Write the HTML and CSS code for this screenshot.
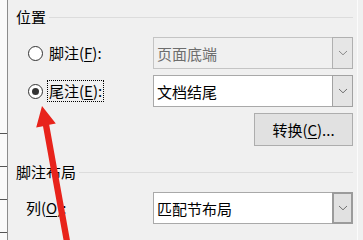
FILE: index.html
```html
<!DOCTYPE html>
<html lang="zh-CN">
<head>
<meta charset="utf-8">
<title>脚注和尾注</title>
<link rel="stylesheet" href="styles.css">
</head>
<body>
<div class="screen">
  <div class="ruler">
    <i class="tick first"></i><i class="tick"></i><i class="tick"></i><i class="tick"></i>
  </div>
  <div class="dialog">
    <div class="group-title"><span class="gt-text">位置</span><span class="rule"></span></div>

    <div class="row r1">
      <div class="opt"><span class="radio"></span><span class="lbl">脚注(<u>F</u>):</span></div>
      <div class="combo disabled">
        <span class="val">页面底端</span>
        <span class="drop"><svg width="10" height="6" viewBox="0 0 10 6"><path d="M1 1 L5 4.8 L9 1" fill="none" stroke="#8a8a8a" stroke-width="1"/></svg></span>
      </div>
    </div>

    <div class="row r2">
      <div class="opt"><span class="radio on"><span class="dot"></span></span><span class="lbl focus">尾注(<u>E</u>):</span></div>
      <div class="combo">
        <span class="val">文档结尾</span>
        <span class="drop"><svg width="10" height="6" viewBox="0 0 10 6"><path d="M1 1 L5 4.8 L9 1" fill="none" stroke="#707070" stroke-width="1"/></svg></span>
      </div>
    </div>

    <div class="btn-row"><span class="btn">转换(<u>C</u>)...</span></div>

    <div class="group-title g2"><span class="gt-text">脚注布局</span><span class="rule"></span></div>

    <div class="row r3">
      <div class="opt"><span class="lbl plain">列(<u>O</u>):</span></div>
      <div class="combo">
        <span class="val">匹配节布局</span>
        <span class="drop hot"><svg width="10" height="6" viewBox="0 0 10 6"><path d="M1 1 L5 4.8 L9 1" fill="none" stroke="#707070" stroke-width="1"/></svg></span>
      </div>
    </div>
  </div>
  <div class="edge"></div>
  <svg class="arrow" width="363" height="240" viewBox="0 0 363 240">
    <polygon points="42,106 55.8,123.6 49.2,124.8 70.2,241.5 64.0,242.6 43.0,126.2 36.2,127.6" fill="#e8231b"/>
  </svg>
</div>
</body>
</html>
```

FILE: styles.css
```css
html, body {
  margin: 0;
  padding: 0;
}
body {
  width: 363px;
  height: 240px;
  overflow: hidden;
  background: #f0f0f0;
  font-family: "Noto Sans CJK SC", "Noto Sans", sans-serif;
  font-size: 15px;
  color: #000;
}
.screen {
  position: relative;
  display: flex;
  width: 363px;
  height: 240px;
  overflow: hidden;
}
.ruler {
  width: 7px;
  height: 240px;
  background: #fafafa;
  border-right: 1px solid #8c8c8c;
  display: flex;
  flex-direction: column;
}
.tick {
  display: block;
  width: 7px;
  height: 1px;
  background: #555;
  margin-top: 32px;
}
.tick.first {
  margin-top: 133px;
}
.dialog {
  width: 349px;
  padding: 0 4px 0 8px;
  box-sizing: border-box;
  display: flex;
  flex-direction: column;
}
.edge {
  width: 6px;
  height: 240px;
  border-left: 1px solid #fbfbfb;
  box-sizing: border-box;
}
.group-title {
  height: 34px;
  display: flex;
  align-items: center;
}
.gt-text {
  line-height: 20px;
  white-space: nowrap;
}
.rule {
  flex: 1;
  height: 1px;
  background: #dcdcdc;
  margin-left: 3px;
}
.group-title.g2 {
  margin-top: 10px;
  height: 32px;
}
.row {
  display: flex;
  height: 32px;
  align-items: center;
}
.r1 { margin-top: 3px; }
.r2 { margin-top: 6px; }
.r3 { margin-top: 4px; }
.opt {
  width: 137px;
  display: flex;
  align-items: center;
}
.radio {
  width: 15px;
  height: 15px;
  margin-left: 12px;
  box-sizing: border-box;
  border: 1px solid #333;
  border-radius: 50%;
  background: #fff;
  display: flex;
  align-items: center;
  justify-content: center;
}
.dot {
  width: 7px;
  height: 7px;
  border-radius: 50%;
  background: #333;
}
.lbl {
  margin-left: 6px;
  line-height: 20px;
  white-space: nowrap;
}
.lbl.focus {
  margin-left: 4px;
  padding: 0 1px;
  line-height: 20px;
  border: 1px dotted #000;
}
.lbl.plain {
  margin-left: 10px;
}
u {
  text-decoration: underline;
  text-underline-offset: 2px;
  text-decoration-thickness: 1px;
}
.combo {
  width: 200px;
  height: 32px;
  display: flex;
}
.val {
  flex: 1;
  box-sizing: border-box;
  border: 1px solid #a9a9a9;
  border-right: none;
  background: #fff;
  padding-left: 3px;
  display: flex;
  align-items: center;
  white-space: nowrap;
}
.drop {
  width: 21px;
  box-sizing: border-box;
  border: 1px solid #a2a2a2;
  background: #e4e4e4;
  display: flex;
  align-items: center;
  justify-content: center;
}
.drop.hot {
  border: 2px solid #9b9b9b;
  background: #e1e1e1;
}
.combo.disabled .val {
  background: #f0f0f0;
  border-color: #c4c4c4;
  color: #6d6d6d;
}
.combo.disabled .drop {
  border-color: #b0b0b0;
  background: #e6e6e6;
}
.btn-row {
  margin-top: 6px;
  display: flex;
  justify-content: flex-end;
}
.btn {
  width: 99px;
  height: 33px;
  box-sizing: border-box;
  border: 1px solid #adadad;
  background: #e1e1e1;
  display: flex;
  align-items: center;
  justify-content: center;
  white-space: nowrap;
}
.arrow {
  position: absolute;
  left: 0;
  top: 0;
  pointer-events: none;
}
```
